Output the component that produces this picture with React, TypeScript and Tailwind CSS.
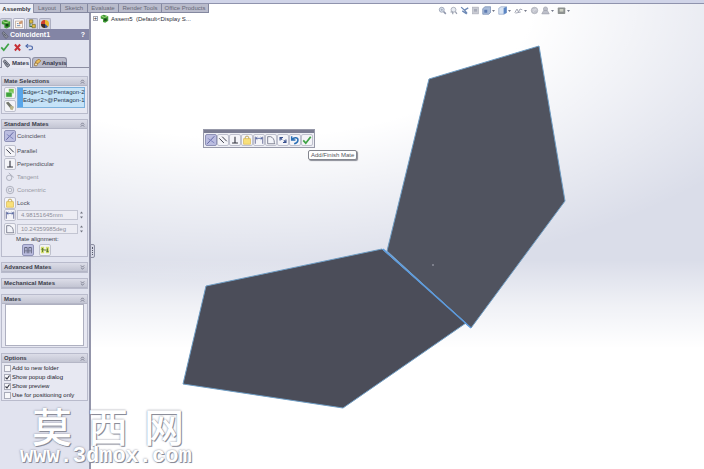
import type { ReactNode } from 'react'

const TABS = [
  { label: 'Layout', width: 'w-[27px]' },
  { label: 'Sketch', width: 'w-[27px]' },
  { label: 'Evaluate', width: 'w-[31px]' },
  { label: 'Render Tools', width: 'w-[43px]' },
  { label: 'Office Products', width: 'w-[47px]' },
]

const GLYPHS: Record<string, ReactNode> = {
  coincident: (
    <g fill="none" stroke="#5b5f9c" strokeWidth="1.100">
      <path d="M1.500 10.500 10 1.500" />
      <path d="M3.500 5 10 9.500" stroke="#7a7fba" />
      <path d="M2 3.500l3 3" stroke="#8a8fc4" />
    </g>
  ),
  parallel: <path d="M1.500 4 7 9.500M5 2l5.500 5.500" stroke="#3d3f4c" strokeWidth="1.200" fill="none" />,
  perpendicular: <path d="M6 2v7.500M2.500 9.500h7" stroke="#2f313c" strokeWidth="1.300" fill="none" />,
  tangent: (
    <g fill="none" stroke="#a4a7b4">
      <circle cx="5" cy="7" r="3.200" />
      <path d="M4.500 1 10.500 6.500" />
    </g>
  ),
  concentric: (
    <g fill="none" stroke="#a4a7b4">
      <circle cx="6" cy="6" r="4.500" />
      <circle cx="6" cy="6" r="2.200" />
    </g>
  ),
  lock: (
    <g>
      <path d="M3.800 5.500V3.500a2.200 2.200 0 0 1 4.400 0v2" fill="none" stroke="#b59a45" />
      <rect x="2" y="4.500" width="8" height="6.500" fill="#f8e07a" stroke="#d9b548" strokeWidth=".8" />
    </g>
  ),
  distance: (
    <g fill="none" stroke="#4e5488">
      <path d="M1.500 2v8.500M10.500 2v8.500" />
      <path d="M2 4h8M4 2.500 2.300 4 4 5.500M8 2.500 9.700 4 8 5.500" stroke="#4a5f9c" />
    </g>
  ),
  angle: (
    <path d="M2 10.500V2h3.500c3 1 4.500 3.500 4.500 7l.500 1.500z" fill="#f3f4f9" stroke="#5f6377" strokeWidth=".9" />
  ),
  flip: (
    <g fill="none" stroke="#39518f" strokeWidth="1.400">
      <path d="M2.500 6.500V3h3.500M9.500 5.500V9H6" />
      <path d="M2.500 3l2.500 2.500M9.500 9 7 6.500" />
    </g>
  ),
  undo: <path d="M2 1.500v4.500h4.500M2.500 5.500C5 2 10 3 9.500 6.500 9.300 8.500 7.500 10 5 10.500" fill="none" stroke="#2a6fb5" strokeWidth="1.800" />,
  back: (
    <g fill="none" stroke="#4a66a8" strokeWidth="1.600">
      <path d="M1 4h6.500a2.300 2.300 0 0 1 0 5H5" />
      <path d="M4 1.500 1.500 4 4 6.500" />
    </g>
  ),
  check: <path d="M1.500 6.500 4.500 9.800 10.500 2" fill="none" stroke="#3fa346" strokeWidth="2.100" />,
  cross: <path d="M2.500 2 9.500 10M9.500 2l-7 8" stroke="#c62f35" strokeWidth="2.600" />,
  assembly: (
    <g>
      <path d="M1 2.500 5 1l6 2v6l-4 2.500-3-1V7L1 6z" fill="#3f9b35" />
      <path d="M2 3l4 1.500 4-1.500" stroke="#c5e89a" fill="none" />
      <path d="M5.500 6H9v3H5.500z" fill="#173f1b" />
    </g>
  ),
  property: (
    <g>
      <rect x="2" y="2.500" width="8" height="8" fill="#fff8ef" stroke="#b19a8b" strokeWidth=".8" />
      <path d="M3.500 5.500h2M3.500 8h4" stroke="#587aa9" />
      <path d="M6 6.500V4l4-2.500v4z" fill="#cf9a72" />
    </g>
  ),
  config: (
    <g>
      <path d="M3 1h4v4H3zM6 6.500h4v4H6z" fill="#e0bd3f" stroke="#6b642f" strokeWidth=".8" />
      <path d="M3.500 5v4H6" stroke="#48753c" strokeWidth="1.300" fill="none" />
    </g>
  ),
  display: (
    <g>
      <circle cx="6" cy="6" r="4.800" fill="#e7b730" />
      <path d="M6 6V1.200A4.800 4.800 0 0 0 1.200 6z" fill="#cf3e30" />
      <path d="M6 6H1.200A4.800 4.800 0 0 0 6 10.800z" fill="#3c2d2a" />
      <path d="M6 6v4.800A4.800 4.800 0 0 0 9.500 9.300z" fill="#35549d" />
    </g>
  ),
  clip: (
    <g fill="none" stroke="#4a4d5a" strokeWidth=".9">
      <path d="M1.500 3 4 1l6.500 7L8 11 5.500 9.500z" fill="#9498a5" />
      <path d="M4 4l3.500 4" strokeWidth="1.300" />
    </g>
  ),
  analysis: (
    <g>
      <path d="M2 10 4 4l4-2.500L10.500 4 7 7z" fill="#e9bd59" stroke="#9a6a24" strokeWidth=".9" />
      <circle cx="4" cy="8.500" r="2" fill="#f4e2b0" stroke="#876632" strokeWidth=".9" />
    </g>
  ),
  entities: (
    <g>
      <path d="M4.500 1h6v5.500h-6z" fill="#79c653" />
      <path d="M1 5h7.500v6H1z" fill="#3fa23b" stroke="#eefbe8" strokeWidth=".6" />
    </g>
  ),
  multi: (
    <g>
      <path d="M1 2 4 1l5.500 6L7 9.500z" fill="#74776d" />
      <path d="M6.500 5.500 11 7 9 11l-3-1z" fill="#b9b58c" />
    </g>
  ),
  aligned: (
    <g fill="none" stroke="#55586d">
      <path d="M2 10V3h3v7M7 10V3h3v7" />
      <path d="M1.500 7h9" stroke="#6f7289" />
    </g>
  ),
  antiAligned: (
    <g>
      <path d="M1 2h4v8H1zM7 2h4v8H7z" fill="#d5df6f" />
      <path d="M3 8.500V4M1.500 5.500 3 4l1.500 1.500M9 4v4.500M7.500 7 9 8.500 10.500 7M4 6h4" stroke="#4d6c2b" strokeWidth="1" fill="none" />
    </g>
  ),
  zoomFit: (
    <g fill="none" stroke="#8e95ab">
      <circle cx="5" cy="5" r="3.300" fill="#dce4ee" />
      <path d="M7.500 7.500l3 3" strokeWidth="2" />
      <path d="M3.500 5h3M5 3.500v3" strokeWidth=".8" />
    </g>
  ),
  zoomArea: (
    <g fill="none" stroke="#999fae">
      <circle cx="6" cy="5" r="3.300" fill="#e8ecf2" />
      <path d="M8.500 7.500l2 3M2 8h3v3" strokeWidth="1.600" />
    </g>
  ),
  previous: <path d="M1.500 1.500l4.500 4 5-3M3 6.500l6 4M6 5.500 9.500 10" fill="none" stroke="#6d89b5" strokeWidth="1.700" />,
  section: (
    <g>
      <rect x="2" y="1.500" width="8" height="9" fill="#c9cbd3" stroke="#a7aab6" strokeWidth=".8" />
      <path d="M4 4h4v3.500H4z" fill="#a8acb9" />
    </g>
  ),
  view: (
    <g>
      <path d="M1 3.500 4 1h7.500v7.500l-2.500 2.500H1z" fill="#a9bcd9" stroke="#6c82ab" strokeWidth=".9" />
      <path d="M3 5v4h4V5z" fill="#5e7bb0" />
    </g>
  ),
  style: (
    <g>
      <path d="M1 3 4 1h7.500v8L8 11H1z" fill="#d9e4f3" stroke="#8498bd" strokeWidth=".8" />
      <path d="M7.500 2.500 11.500 1v8l-4 2z" fill="#5c86c4" />
    </g>
  ),
  hide: <path d="M1 9 4 4l2 4 2-4 3 1M2 9.500 9 8" fill="none" stroke="#9b9ead" strokeWidth="1.200" />,
  sphere: (
    <g>
      <circle cx="6" cy="6" r="4.300" fill="#c3c5ce" stroke="#a0a3ad" strokeWidth=".8" />
      <path d="M3 5h6M4 8l4-5" stroke="#dddfe5" />
    </g>
  ),
  scene: (
    <g fill="#bdbfc9" stroke="#9b9eaa" strokeWidth=".8">
      <circle cx="6" cy="4" r="2.800" />
      <path d="M1 10.500 3.500 6h5l2.500 4.500z" />
    </g>
  ),
  settings: (
    <g>
      <rect x="1" y="2" width="10" height="8.500" rx="1" fill="#8e9291" />
      <rect x="3.500" y="4" width="5" height="3.500" fill="#cdd0c4" />
    </g>
  ),
}

function Glyph({ name, className = 'size-[11px]' }: { name: string; className?: string }) {
  return (
    <svg viewBox="0 0 12 12" className={`${className} shrink-0`} aria-hidden="true">
      {GLYPHS[name]}
    </svg>
  )
}

function IconButton({ name, label, pressed }: { name: string; label: string; pressed?: boolean }) {
  return (
    <button
      type="button"
      aria-label={label}
      className={`flex size-3 shrink-0 items-center justify-center rounded-[2px] border ${
        pressed ? 'border-[#8f92b6] bg-[#bbbde0]' : 'border-[#bfc1ce] bg-[#f4f4f8]'
      }`}
    >
      <Glyph name={name} className="size-[10px]" />
    </button>
  )
}

function Group({ title, open = true, className = '', children }: { title: string; open?: boolean; className?: string; children?: ReactNode }) {
  return (
    <section className={`border border-[#b9bbcc] bg-[#e7e8f2] ${className}`}>
      <h2>
        <button
          type="button"
          aria-expanded={open}
          className="flex h-[9px] w-full items-center justify-between border-b border-[#b4b6c6] bg-linear-to-b from-[#dcdde8] to-[#c3c5d3] px-[2px] font-bold text-[#3b3d4a]"
        >
          {title}
          <svg viewBox="0 0 6 6" className="size-[5px]" fill="none" stroke="#6d7082" aria-hidden="true">
            <path d={open ? 'M1 3l2-2 2 2M1 5.500l2-2 2 2' : 'M1 .5l2 2 2-2M1 3l2 2 2-2'} />
          </svg>
        </button>
      </h2>
      {children}
    </section>
  )
}

function MateRow({ name, label, pressed, disabled }: { name: string; label: string; pressed?: boolean; disabled?: boolean }) {
  return (
    <button type="button" disabled={disabled} className={`flex h-[13px] items-center gap-px ${disabled ? 'text-[#9698a4]' : 'text-[#4a4c58]'}`}>
      <span
        className={`flex size-3 items-center justify-center rounded-[2px] ${
          pressed ? 'border border-[#8f92b6] bg-[#bbbde0]' : disabled ? '' : 'border border-[#bfc1ce] bg-[#f4f4f8]'
        }`}
      >
        <Glyph name={name} className="size-[10px]" />
      </span>
      {label}
    </button>
  )
}

function ValueRow({ name, label, value }: { name: string; label: string; value: string }) {
  return (
    <div className="flex h-3 items-center gap-px">
      <IconButton name={name} label={label} />
      <input
        aria-label={label}
        defaultValue={value}
        className="h-[10px] w-[61px] border border-[#c3c5d2] bg-[#ececf3] px-[3px] text-[#8c8e9a]"
      />
      <svg viewBox="0 0 5 10" className="h-[10px] w-[5px]" fill="#70737f" aria-hidden="true">
        <path d="M1 3.500 2.500 1.500 4 3.500zM1 6.500 2.500 8.500 4 6.500z" />
      </svg>
    </div>
  )
}

function Option({ label, checked = false }: { label: string; checked?: boolean }) {
  return (
    <label className="flex items-center gap-px text-[#22242e]">
      <span className="relative flex size-[7px]">
        <input
          type="checkbox"
          defaultChecked={checked}
          className="peer size-[7px] appearance-none border border-[#a9abb9] bg-[#f7f7fa]"
        />
        <svg viewBox="0 0 7 7" className="pointer-events-none absolute inset-0 hidden peer-checked:block" aria-hidden="true">
          <path d="M1.500 3.500 3 5 5.500 1.500" fill="none" stroke="#30323f" strokeWidth="1.100" />
        </svg>
      </span>
      {label}
    </label>
  )
}

function PropertyPanel() {
  return (
    <aside className="relative w-[91px] shrink-0 border-r-2 border-[#9395aa] bg-[#e1e3ef] pt-[13px]">
      <div className="flex h-3 items-end gap-px">
        {['assembly', 'property', 'config', 'display'].map((name) => (
          <button
            key={name}
            type="button"
            aria-label={name}
            className={`flex h-[11px] w-3 items-center justify-center rounded-t-[2px] border border-b-0 border-[#aeb0c2] ${
              name === 'property' ? 'bg-[#f6f6fa]' : 'bg-[#cfd1df]'
            }`}
          >
            <Glyph name={name} className="size-[10px]" />
          </button>
        ))}
      </div>
      <header className="flex h-[11px] items-center gap-px bg-[#8385a5] px-px text-[7px] font-bold text-white">
        <Glyph name="clip" className="size-2" />
        <h1 className="flex-1">Coincident1</h1>
        <button type="button" aria-label="Help" className="px-[3px]">
          ?
        </button>
      </header>
      <div className="flex h-[14px] items-center gap-[3px]">
        <button type="button" aria-label="OK">
          <Glyph name="check" className="block size-[10px]" />
        </button>
        <button type="button" aria-label="Cancel">
          <Glyph name="cross" className="block size-[9px]" />
        </button>
        <button type="button" aria-label="Undo">
          <Glyph name="back" className="block size-[9px]" />
        </button>
      </div>
      <div className="mt-[3px] flex h-[11px] border-b border-[#8d8fa3] pl-px font-bold text-[#35374a]">
        <button type="button" className="-mb-px flex w-[30px] items-center gap-px rounded-t-[3px] border border-b-0 border-[#8d8fa3] bg-[#e7e8f2]">
          <Glyph name="clip" className="size-[9px]" />
          Mates
        </button>
        <button type="button" className="ml-px flex w-[35px] items-center rounded-t-[3px] border border-b-0 border-[#8d8fa3] bg-[#b9bbca]">
          <Glyph name="analysis" className="size-[9px]" />
          Analysis
        </button>
      </div>

      <div className="mt-2 flex flex-col gap-[5px] px-px">
        <Group title="Mate Selections" className="h-[38px]">
          <div className="flex gap-px px-[2px] pt-px">
            <div className="flex flex-col gap-px">
              <IconButton name="entities" label="Entities to mate" />
              <IconButton name="multi" label="Multiple mate mode" />
            </div>
            <div className="flex h-[21px] flex-1 border border-[#7cb2dd] bg-[#c6e3f8] text-[#1f3347]">
              <div className="w-[5px] bg-[#58a5ea]" />
              <ul className="w-0 flex-1 leading-[8px] whitespace-nowrap">
                <li>Edge&lt;1&gt;@Pentagon-2</li>
                <li>Edge&lt;2&gt;@Pentagon-1</li>
              </ul>
            </div>
          </div>
        </Group>

        <Group title="Standard Mates" className="h-[138px]">
          <div className="flex flex-col items-start pl-[2px]">
            <MateRow name="coincident" label="Coincident" pressed />
            <div className="h-[2px]" />
            <MateRow name="parallel" label="Parallel" />
            <MateRow name="perpendicular" label="Perpendicular" />
            <MateRow name="tangent" label="Tangent" disabled />
            <MateRow name="concentric" label="Concentric" disabled />
            <MateRow name="lock" label="Lock" />
            <ValueRow name="distance" label="Distance" value="4.98151645mm" />
            <div className="h-[2px]" />
            <ValueRow name="angle" label="Angle" value="10.24359985deg" />
          </div>
          <p className="pl-[14px] text-[#3a3c49]">Mate alignment:</p>
          <div className="flex gap-[5px] pt-px pl-5">
            <IconButton name="aligned" label="Aligned" pressed />
            <IconButton name="antiAligned" label="Anti-aligned" />
          </div>
        </Group>

        <Group title="Advanced Mates" open={false} />
        <Group title="Mechanical Mates" open={false} />
        <Group title="Mates" className="h-[54px]">
          <div className="mx-[3px] h-[42px] border border-[#aeb0c0] bg-white" />
        </Group>
        <Group title="Options" className="h-[48px]">
          <div className="flex flex-col gap-px pt-px pl-[2px] leading-[8px]">
            <Option label="Add to new folder" />
            <Option label="Show popup dialog" checked />
            <Option label="Show preview" checked />
            <Option label="Use for positioning only" />
          </div>
        </Group>
      </div>

      <button
        type="button"
        aria-label="Collapse panel"
        className="absolute top-[240px] -right-[6px] z-10 flex h-[14px] w-[5px] items-center justify-center rounded-r-[2px] border border-[#8d8fa3] bg-[#d6d8e4]"
      >
        <span className="h-2 border-l border-dotted border-[#55586d]" />
      </button>
    </aside>
  )
}

const HUD = [
  { name: 'zoomFit', label: 'Zoom to fit' },
  { name: 'zoomArea', label: 'Zoom to area' },
  { name: 'previous', label: 'Previous view' },
  { name: 'section', label: 'Section view' },
  { name: 'view', label: 'View orientation', menu: true },
  { name: 'style', label: 'Display style', menu: true },
  { name: 'hide', label: 'Hide/show items', menu: true },
  { name: 'sphere', label: 'Edit appearance' },
  { name: 'scene', label: 'Apply scene', menu: true },
  { name: 'settings', label: 'View settings', menu: true },
]

function HeadsUpBar() {
  return (
    <div className="absolute top-[2px] left-[347px] flex items-center gap-[2px]">
      {HUD.map((item) => (
        <button key={item.name} type="button" aria-label={item.label} className="flex items-center">
          <Glyph name={item.name} className="size-[9px]" />
          {item.menu && (
            <svg viewBox="0 0 5 5" className="size-[5px]" fill="#777b8b" aria-hidden="true">
              <path d="M1 2h3L2.500 4z" />
            </svg>
          )}
        </button>
      ))}
    </div>
  )
}

function MateToolbar() {
  return (
    <div className="absolute top-[125px] left-[112px] border border-[#9799a9] bg-[#eeeff5]">
      <div className="h-[3px] bg-[#7b7d92]" />
      <div className="flex items-center px-px py-px">
        <IconButton name="coincident" label="Coincident" pressed />
        <IconButton name="parallel" label="Parallel" />
        <IconButton name="perpendicular" label="Perpendicular" />
        <IconButton name="lock" label="Lock" />
        <IconButton name="distance" label="Distance" />
        <IconButton name="angle" label="Angle" />
        <IconButton name="flip" label="Flip mate alignment" />
        <IconButton name="undo" label="Undo" />
        <IconButton name="check" label="Add/Finish Mate" />
      </div>
    </div>
  )
}

function Viewport() {
  return (
    <main className="relative flex-1 overflow-hidden bg-[#dadde9]">
      <div className="absolute inset-0 bg-[radial-gradient(ellipse_98%_60%_at_25%_0%,#fff_48%,transparent)]" />
      <div className="absolute inset-0 bg-linear-to-b from-transparent from-55% via-white/60 via-65% to-white to-74%" />
      <svg viewBox="91 4 613 465" className="absolute top-0 left-0 w-full" role="img" aria-label="Two pentagon plates">
        <g strokeWidth="1" stroke="#6f9dc4">
          <path d="M429 79 539 46 565 201 471 328 387 251z" fill="#50535f" />
          <path d="M206 286 382 249 466 323 343 408 183 384z" fill="#4b4d59" />
        </g>
        <path d="M383 249 471 328" stroke="#5b9ade" strokeWidth="1.500" />
        <circle cx="433" cy="265" r="1" fill="#8b8e9a" />
      </svg>
      <div className="absolute top-[10px] left-[2px] flex items-center gap-[2px] text-[#2c2e38]">
        <button type="button" aria-label="Expand Assem5" className="flex size-[5px] items-center justify-center border border-[#a7a9b5] leading-[5px]">
          +
        </button>
        <Glyph name="assembly" className="size-[9px]" />
        <span className="whitespace-pre">Assem5  (Default&lt;Display S...</span>
      </div>
      <HeadsUpBar />
      <MateToolbar />
      <div role="tooltip" className="absolute top-[146px] left-[217px] rounded-[2px] border border-[#84868f] bg-white px-[2px] leading-[8px] whitespace-nowrap text-[#555761] shadow-[1px_1px_1px_#8a8c96]">
        Add/Finish Mate
      </div>
    </main>
  )
}

export default function App() {
  return (
    <div className="relative flex min-h-screen flex-col overflow-hidden bg-[#e1e3ef] font-['Liberation_Sans',Arial,sans-serif] text-[6px] leading-[8px]">
      <div className="h-1 border-b border-[#8f93ad] bg-[#d0d4e8]" />
      <div className="relative flex flex-1">
        <PropertyPanel />
        <Viewport />
        <nav className="absolute top-0 left-0 flex h-[9px] text-[#676978]">
          <a href="#assembly" className="flex w-[34px] items-center justify-center border-r border-[#8f91a5] bg-[#eff0f6] font-bold text-[#33353f]">
            Assembly
          </a>
          {TABS.map((tab) => (
            <a
              key={tab.label}
              href="#tab"
              className={`flex items-center justify-center border-r border-b border-[#8488a0] bg-[#babccc] whitespace-nowrap ${tab.width}`}
            >
              {tab.label}
            </a>
          ))}
        </nav>
      </div>
      <div className="pointer-events-none absolute top-[403px] left-5 font-['Noto_Sans_CJK_SC',sans-serif] text-white [text-shadow:1px_1px_0_#8b8d99,0_0_2px_#7d7f8c]">
        <p className="flex gap-4 pl-3 text-[40px] leading-[44px] font-medium">
          <span>莫</span>
          <span>西</span>
          <span>网</span>
        </p>
        <p className="font-['Liberation_Mono',monospace] text-[22px] leading-[20px] font-bold">www.3dmox.com</p>
      </div>
    </div>
  )
}
